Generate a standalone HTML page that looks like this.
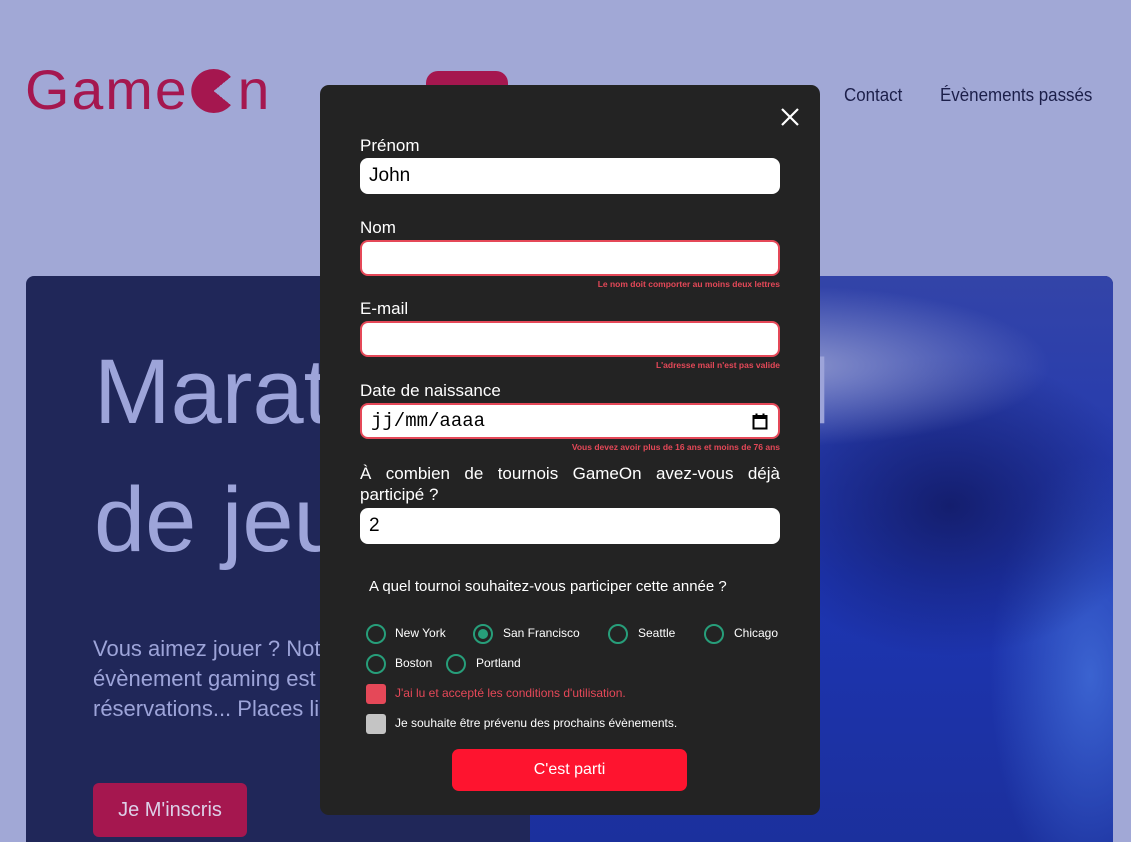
<!DOCTYPE html>
<html><head><meta charset="utf-8"><style>
*{box-sizing:border-box;margin:0;padding:0}
html,body{width:1131px;height:842px;overflow:hidden}
body{background:#a1a8d6;font-family:"Liberation Sans",sans-serif;position:relative}
.logo{position:absolute;left:25px;top:60px;font-size:56px;color:#a5174f;letter-spacing:2px;line-height:60px;transform:scaleX(1.02);transform-origin:left}
.nav{position:absolute;top:85px;font-size:18px;color:#1c1f4a;font-family:"Liberation Sans Narrow","Liberation Sans",sans-serif;transform:scaleX(.94);transform-origin:left}
.navbtn{position:absolute;left:426px;top:71px;width:82px;height:40px;background:#a5174f;border-radius:12px}
.hero{position:absolute;left:26px;top:276px;width:1087px;height:600px;border-radius:8px;overflow:hidden;background:#202759}
.img{position:absolute;left:504px;top:0;right:0;bottom:0;background:radial-gradient(ellipse 260px 80px at 260px 90px,#8a93cc,transparent),radial-gradient(ellipse 200px 150px at 420px 230px,#141e6e,transparent),radial-gradient(ellipse 100px 220px at 560px 400px,#3b63d0,transparent),linear-gradient(180deg,#3344a8,#1d35b2 50%,#1b2f9a)}
.h1{position:absolute;left:68px;top:52px;font-size:92px;line-height:128px;color:#9da4d9}
.p{position:absolute;left:67px;top:358px;font-size:22px;line-height:30px;color:#9da4d9}
.btn{position:absolute;left:67px;top:507px;width:154px;height:54px;background:#a5174f;border-radius:6px;color:#dcd0e8;font-size:20px;line-height:54px;text-align:center}
.modal{position:absolute;left:320px;top:85px;width:500px;height:730px;background:#232323;border-radius:9px;color:#fff}
.close{position:absolute;left:460px;top:22px}
.lbl{position:absolute;left:40px;font-size:17px}
.inp{position:absolute;left:40px;width:420px;height:36px;background:#fff;border-radius:8px;color:#000;font-size:19px;padding-left:9px;line-height:36px}
.err{border:2px solid #e54858}
.em{position:absolute;right:40px;font-size:8.5px;color:#e54858;font-weight:bold}
.r{position:absolute;font-size:12px}
.c{position:absolute;width:20px;height:20px;border:2px solid #279e7a;border-radius:50%}
.sel::after{content:"";position:absolute;left:3px;top:3px;width:10px;height:10px;border-radius:50%;background:#279e7a}
.cb{position:absolute;left:46px;width:20px;height:20px;border-radius:3px}
.go{position:absolute;left:132px;top:664px;width:235px;height:42px;background:#fe142f;border-radius:7px;text-align:center;line-height:42px;font-size:16px}
</style></head><body>
<div class="logo">Game<span style="display:inline-block;width:44px;height:44px;border-radius:50%;background:conic-gradient(from 50deg,transparent 0 80deg,#a5174f 80deg);vertical-align:-4px;margin:0 2px"></span>n</div>
<div class="navbtn"></div>
<div class="nav" style="left:844px">Contact</div>
<div class="nav" style="left:940px">Évènements passés</div>
<div class="hero">
<div class="img"></div>
<div class="h1">Marathon national<br>de jeux vidéos</div>
<div class="p">Vous aimez jouer ? Notre prochain<br>évènement gaming est ouvert aux<br>réservations... Places limitées !</div>
<div class="btn">Je M'inscris</div>
</div>
<div class="modal">
<svg class="close" width="20" height="20" viewBox="0 0 20 20"><path d="M2 2L18 18M18 2L2 18" stroke="#fff" stroke-width="2.2"/></svg>
<div class="lbl" style="top:51px">Prénom</div>
<div class="inp" style="top:73px">John</div>
<div class="lbl" style="top:133px">Nom</div>
<div class="inp err" style="top:155px"></div>
<div class="em" style="top:194px">Le nom doit comporter au moins deux lettres</div>
<div class="lbl" style="top:214px">E-mail</div>
<div class="inp err" style="top:236px"></div>
<div class="em" style="top:275px">L'adresse mail n'est pas valide</div>
<div class="lbl" style="top:296px">Date de naissance</div>
<div class="inp err" style="top:318px;font-family:'Liberation Mono',monospace;font-size:19px;line-height:32px">jj/mm/aaaa<svg style="position:absolute;right:10px;top:8px" width="16" height="17" viewBox="0 0 16 17"><rect x="1.5" y="3" width="13" height="12.5" fill="none" stroke="#000" stroke-width="2"/><rect x="1.5" y="3" width="13" height="3" fill="#000"/><path d="M4.5 0.5v3M11.5 0.5v3" stroke="#000" stroke-width="2"/></svg></div>
<div class="em" style="top:357px">Vous devez avoir plus de 16 ans et moins de 76 ans</div>
<div class="lbl" style="top:378px;width:420px;text-align:justify;text-align-last:justify;line-height:22px">À combien de tournois GameOn avez-vous déjà</div>
<div class="lbl" style="top:400px">participé ?</div>
<div class="inp" style="top:423px">2</div>
<div class="lbl" style="top:493px;left:49px;font-size:15px">A quel tournoi souhaitez-vous participer cette année ?</div>
<div class="c" style="left:46px;top:539px"></div><div class="r" style="left:75px;top:541px">New York</div>
<div class="c sel" style="left:153px;top:539px"></div><div class="r" style="left:183px;top:541px">San Francisco</div>
<div class="c" style="left:288px;top:539px"></div><div class="r" style="left:318px;top:541px">Seattle</div>
<div class="c" style="left:384px;top:539px"></div><div class="r" style="left:414px;top:541px">Chicago</div>
<div class="c" style="left:46px;top:569px"></div><div class="r" style="left:75px;top:571px">Boston</div>
<div class="c" style="left:126px;top:569px"></div><div class="r" style="left:156px;top:571px">Portland</div>
<div class="cb" style="top:599px;background:#e54858"></div><div class="r" style="left:75px;top:601px;color:#e54858">J'ai lu et accepté les conditions d'utilisation.</div>
<div class="cb" style="top:629px;background:#c4c4c4"></div><div class="r" style="left:75px;top:631px">Je souhaite être prévenu des prochains évènements.</div>
<div class="go">C'est parti</div>
</div>
</body></html>
